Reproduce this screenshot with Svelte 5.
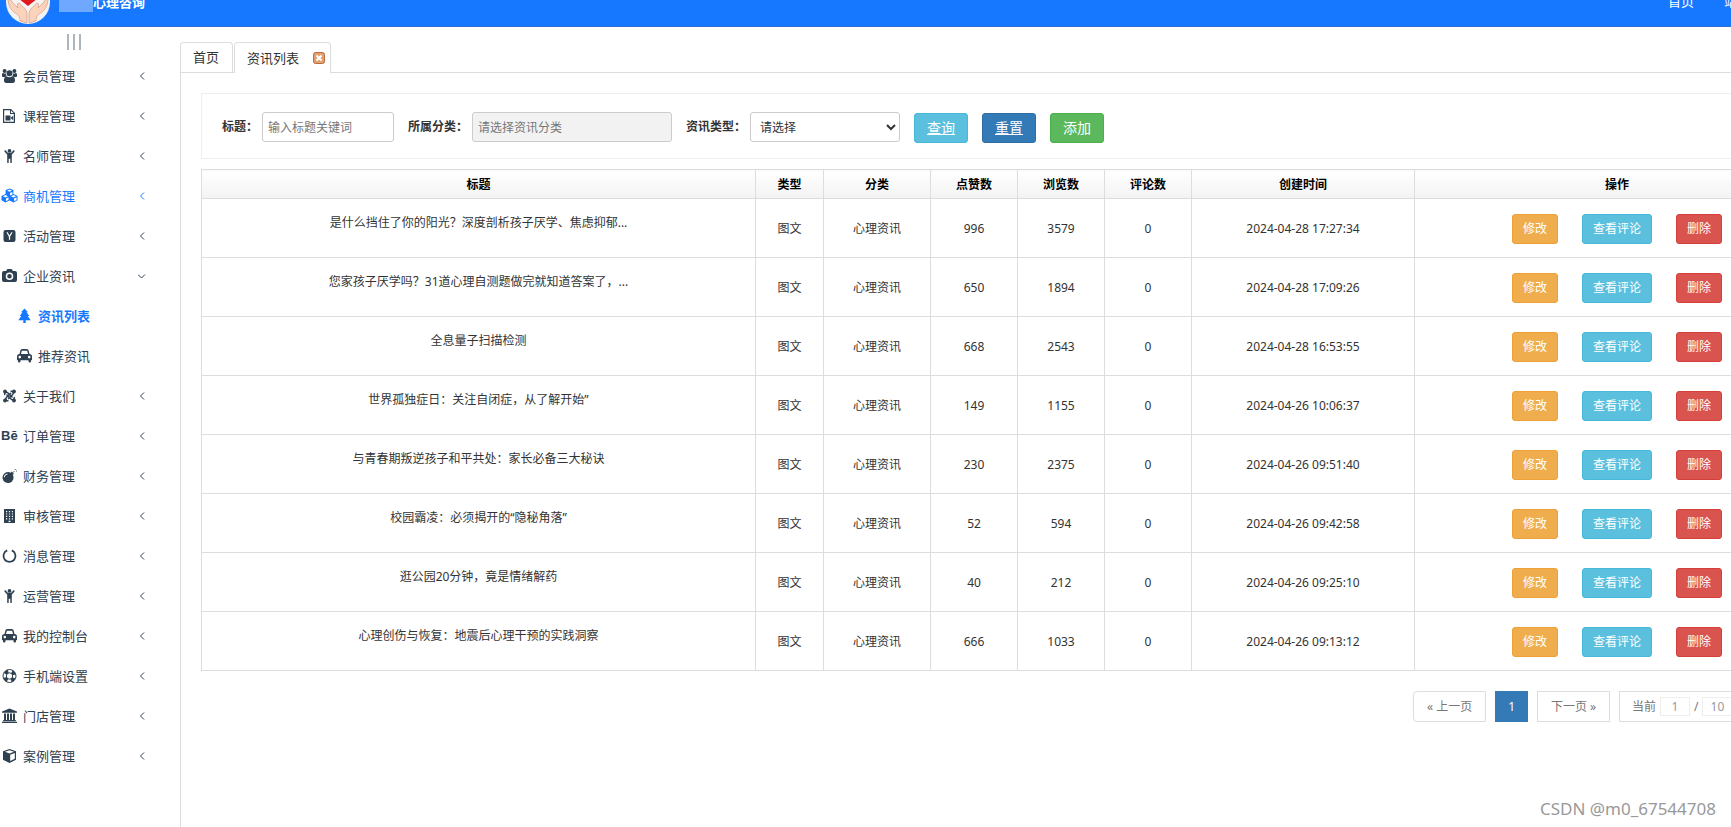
<script lang="ts">
  type MenuItem = { label: string; icon: string; open?: boolean; active?: boolean; children?: MenuItem[] };

  const menu: MenuItem[] = [
    { label: '会员管理', icon: 'users' },
    { label: '课程管理', icon: 'video' },
    { label: '名师管理', icon: 'child' },
    { label: '商机管理', icon: 'cubes', active: true },
    { label: '活动管理', icon: 'ycomb' },
    {
      label: '企业资讯',
      icon: 'camera',
      open: true,
      children: [
        { label: '资讯列表', icon: 'tree', active: true },
        { label: '推荐资讯', icon: 'car' }
      ]
    },
    { label: '关于我们', icon: 'joomla' },
    { label: '订单管理', icon: 'behance' },
    { label: '财务管理', icon: 'bomb' },
    { label: '审核管理', icon: 'building' },
    { label: '消息管理', icon: 'notch' },
    { label: '运营管理', icon: 'child' },
    { label: '我的控制台', icon: 'car' },
    { label: '手机端设置', icon: 'ring' },
    { label: '门店管理', icon: 'bank' },
    { label: '案例管理', icon: 'cube' }
  ];

  // filled shapes, drawn with the even-odd rule
  const shapes: Record<string, string> = {
    users:
      'M3.6 1a2 2 0 1 1 0 4 2 2 0 0 1 0-4zM13.4 1a2 2 0 1 1 0 4 2 2 0 0 1 0-4zM8.5 2.2a3 3 0 1 1 0 6 3 3 0 0 1 0-6zM1 8V6.8C1 5.6 1.5 5 2.3 5c.6.6 1.7.7 2.5.4 0 1.1.3 2 .9 2.7-.8 0-1.4.4-1.8.9H2.3C1.5 9 1 8.7 1 8zM16 8V6.8C16 5.6 15.5 5 14.7 5c-.6.6-1.7.7-2.5.4 0 1.1-.3 2-.9 2.7.8 0 1.4.4 1.8.9h1.6c.8 0 1.3-.3 1.3-1zM5.6 8.300c1.600 1.300 4.200 1.300 5.800 0 1.800 0 2.600 1.600 2.600 4.200 0 1.600-.8 2.500-2.200 2.500H5.200C3.800 15 3 14.100 3 12.500c0-2.600.8-4.200 2.600-4.200z',
    video:
      'M2 1h8l4 4v10H2zM3.200 2.200v11.600h9.600V6H9V2.200zM10 2.400V5h2.600zM4.500 7.500h5v5h-5zM9.800 9.700l2.400-2v4.600l-2.400-2z',
    child:
      'M8.500 1a1.900 1.900 0 1 1 0 3.800 1.900 1.900 0 0 1 0-3.800zM3.600 2.600c.3-.4.9-.4 1.200 0L7 4.900h3l2.200-2.300c.8-.8 1.900.3 1.200 1.200L10.800 6.600v7.800c0 .9-1.500.9-1.500 0v-3.600H7.700v3.600c0 .9-1.500.9-1.500 0V6.600L3.600 3.800c-.3-.4-.3-.8 0-1.200z',
    cubes:
      'M8.500.5l3.900 1.600v4l4.100 1.800v4.400l-4 2.200-4-2-4 2-4-2.200V7.900l4.100-1.800v-4zM8.500 1.600L6 2.700l2.500 1.100L11 2.700zM9 4.900v2.500l2.400-1V3.900zM4.500 7.100L2 8.200l2.500 1.200L7 8.200zM5 10.400v2.700l2.500-1.200V9.300zM12.500 7.100L10 8.200l2.500 1.200L15 8.200zM13 10.400v2.700l2.500-1.200V9.300z',
    ycomb:
      'M4.500 2h8a2 2 0 0 1 2 2v8a2 2 0 0 1-2 2h-8a2 2 0 0 1-2-2V4a2 2 0 0 1 2-2zM5.400 4.300l2.500 4.500v3h1.200v-3l2.500-4.500h-1.300L8.500 7.500 6.700 4.300z',
    camera:
      'M3 3h2.200l.7-1.500C6 1.200 6.400 1 6.700 1h3.600c.3 0 .7.2.8.5l.7 1.500H14a2 2 0 0 1 2 2v7a2 2 0 0 1-2 2H3a2 2 0 0 1-2-2V5a2 2 0 0 1 2-2zM8.500 4.500a3.800 3.800 0 1 0 0 7.600 3.800 3.800 0 0 0 0-7.600zM8.500 6a2.300 2.300 0 1 1 0 4.600 2.300 2.300 0 0 1 0-4.600z',
    tree: 'M8.500 .5L12 4.300h-1.500L13.300 8h-1.600l3 4.300H9.600l.2 2.700H7.200l.2-2.700H2.300l3-4.300H3.700l2.800-3.700H5z',
    car: 'M4.300 2.800C4.600 1.700 5.300 1 6.300 1h4.400c1 0 1.700.7 2 1.800L13.500 6c1.600 0 2.500 1 2.500 2.400v3.300c0 .3-.2.5-.5.5H15v1c0 1.700-2.500 1.700-2.500 0v-1h-8v1c0 1.700-2.500 1.700-2.500 0v-1h-.5c-.3 0-.5-.2-.5-.5V8.400C1 7 1.900 6 3.500 6zM5 6h7l-.7-2.800c-.1-.3-.3-.4-.6-.4H6.300c-.3 0-.5.1-.6.4zM3.800 7.800a1.300 1.300 0 1 0 0 2.600 1.300 1.300 0 0 0 0-2.600zM13.200 7.800a1.300 1.300 0 1 0 0 2.600 1.300 1.300 0 0 0 0-2.600z',
    bomb: 'M7 4c1 0 1.900.2 2.700.7L10.800 3.600l2.100 2.100-1.100 1.100A5.500 5.500 0 1 1 7 4zM6.500 5.500C4.500 5.700 3 7.200 2.800 9.200h1c.2-1.500 1.300-2.500 2.700-2.700z',
    building:
      'M3 1h11v14H3zM7.500 12.700V14h2v-1.300zM5 3v1.200h1.200V3zM7.900 3v1.200h1.200V3zM10.800 3v1.200H12V3zM5 5.400v1.200h1.200V5.400zM7.900 5.400v1.200h1.200V5.400zM10.800 5.400v1.200H12V5.400zM5 7.800V9h1.200V7.800zM7.900 7.800V9h1.200V7.800zM10.800 7.800V9H12V7.800zM5 10.200v1.200h1.200v-1.200zM7.900 10.200v1.200h1.200v-1.200zM10.800 10.200v1.200H12v-1.200z',
    bank: 'M8.500.5L16 3.500V4.800H1V3.500zM3 5.500h2V12h1V5.500h2V12h1V5.500h2V12h1V5.500h2V12h.8v1.200H2.200V12H3zM1 13.800h15V15H1z',
    cube: 'M8.500 1L15 3.300v8.400L8.500 15 2 11.700V3.300zM8.500 2.200L4 3.800l4.500 1.700L13 3.800zM9.200 6.800v6.300l4.600-2.300V5z'
  };

  // outlined shapes
  const lines: Record<string, string> = {
    bomb: 'M12 4.500l1.500-1.500M13.800 1.500h1M15.500 2.500v1',
    notch: 'M6.200 2.400a6 6 0 1 0 4.600 0'
  };

  const columns = ['标题', '类型', '分类', '点赞数', '浏览数', '评论数', '创建时间', '操作'];

  const rows = [
    { title: '是什么挡住了你的阳光？深度剖析孩子厌学、焦虑抑郁...', likes: 996, views: 3579, time: '2024-04-28 17:27:34' },
    { title: '您家孩子厌学吗？31道心理自测题做完就知道答案了，...', likes: 650, views: 1894, time: '2024-04-28 17:09:26' },
    { title: '全息量子扫描检测', likes: 668, views: 2543, time: '2024-04-28 16:53:55' },
    { title: '世界孤独症日：关注自闭症，从了解开始”', likes: 149, views: 1155, time: '2024-04-26 10:06:37' },
    { title: '与青春期叛逆孩子和平共处：家长必备三大秘诀', likes: 230, views: 2375, time: '2024-04-26 09:51:40' },
    { title: '校园霸凌：必须揭开的“隐秘角落”', likes: 52, views: 594, time: '2024-04-26 09:42:58' },
    { title: '逛公园20分钟，竟是情绪解药', likes: 40, views: 212, time: '2024-04-26 09:25:10' },
    { title: '心理创伤与恢复：地震后心理干预的实践洞察', likes: 666, views: 1033, time: '2024-04-26 09:13:12' }
  ];
</script>

{#snippet icon(name: string)}
  <svg class="icon" viewBox="0 0 17 16" aria-hidden="true">
    {#if name === 'behance'}
      <text x="0" y="12" class="behance">Bē</text>
    {:else if name === 'ring'}
      <g fill="none" stroke="currentColor">
        <circle cx="8.5" cy="8" r="6.5" />
        <circle cx="8.5" cy="8" r="3.2" />
        <circle cx="8.5" cy="8" r="4.800" stroke-width="3.600" stroke-dasharray="3.770" stroke-dashoffset="-1.885" />
      </g>
    {:else if name === 'joomla'}
      <g fill="currentColor">
        <circle cx="4" cy="3.5" r="1.900" />
        <circle cx="13" cy="3.5" r="1.900" />
        <circle cx="4" cy="12.5" r="1.900" />
        <circle cx="13" cy="12.5" r="1.900" />
      </g>
      <path
        d="M3.700 7C3 5.200 5.300 3.400 7 5l4.500 4.500M9.500 3.400c1.800-.7 3.800 1.300 2.200 3.100L7 11M13.300 9c.7 1.800-1.600 3.600-3.300 2L5.500 6.500M7.500 12.600c-1.800.7-3.800-1.300-2.200-3.100L10 5"
        fill="none"
        stroke="currentColor"
        stroke-width="1.500"
      />
    {/if}
    {#if shapes[name]}
      <path d={shapes[name]} fill="currentColor" fill-rule="evenodd" />
    {/if}
    {#if lines[name]}
      <path d={lines[name]} fill="none" stroke="currentColor" stroke-width={name === 'bomb' ? 0.8 : 1.8} />
    {/if}
  </svg>
{/snippet}

{#snippet entry(item: MenuItem, sub: boolean)}
  <a href="#menu" class="menu-link" class:sub class:active={item.active}>
    {@render icon(item.icon)}
    <span>{item.label}</span>
    {#if !sub}
      <svg class="arrow" viewBox="0 0 8 8" aria-hidden="true">
        <path d={item.open ? 'M0 2.500L3.500 6 7 2.500' : 'M6 .5L2.500 4 6 7.500'} fill="none" stroke="currentColor" />
      </svg>
    {/if}
  </a>
{/snippet}

<div class="page">
  <div class="canvas">
    <header class="topbar">
      <div class="brand">
        <svg class="logo" viewBox="0 0 44 44" aria-hidden="true">
          <circle cx="22" cy="22" r="22" fill="#f3f3f4" />
          <path d="M22 26C17 22 10 18 10 12c0-7 9-8 12-2 3-6 12-5 12 2 0 6-7 10-12 14z" fill="#e0191f" />
          <path d="M2 18c3 1 4 5 7 7l3 3c-1-3-1-5 1-5 3 3 8 6 8 11v9l-7-2c0-5-3-7-6-9-4-3-6-8-6-14z" fill="#fbd3bb" stroke="#d99a7c" stroke-width=".7" />
          <path d="M42 18c-3 1-4 5-7 7l-3 3c1-3 1-5-1-5-3 3-8 6-8 11v9l7-2c0-5 3-7 6-9 4-3 6-8 6-14z" fill="#fbd3bb" stroke="#d99a7c" stroke-width=".7" />
        </svg>
        <span class="mask"></span>
        <strong>心理咨询</strong>
      </div>
      <nav class="top-nav">
        <a href="#home">首页</a>
        <a href="#site">站</a>
      </nav>
    </header>

    <div class="body">
      <aside class="sidebar">
        <button class="toggle" type="button" aria-label="收起菜单"><i></i><i></i><i></i></button>
        <nav>
          {#each menu as item}
            {@render entry(item, false)}
            {#each item.children ?? [] as child}
              {@render entry(child, true)}
            {/each}
          {/each}
        </nav>
      </aside>

      <main class="main">
        <div class="tabs">
          <a href="#home" class="tab">首页</a>
          <div class="tab current">
            <a href="#list">资讯列表</a>
            <button type="button" class="close" aria-label="关闭">
              <svg viewBox="0 0 12 12" aria-hidden="true">
                <rect x=".5" y=".5" width="11" height="11" rx="2" fill="#e0a070" stroke="#bd6c38" />
                <path d="M3.500 3.500l5 5M8.500 3.500l-5 5" stroke="#fff" stroke-width="2" />
              </svg>
            </button>
          </div>
        </div>

        <div class="panel">
          <form class="filter">
            <div class="field">
              <label for="title">标题：</label>
              <input id="title" type="text" class="short" placeholder="输入标题关键词" />
            </div>
            <div class="field">
              <label for="category">所属分类：</label>
              <input id="category" type="text" class="long" placeholder="请选择资讯分类" readonly />
            </div>
            <div class="field">
              <label for="type">资讯类型：</label>
              <select id="type"><option>请选择</option></select>
            </div>
            <button type="button" class="btn large info underlined">查询</button>
            <button type="button" class="btn large primary underlined">重置</button>
            <button type="button" class="btn large success">添加</button>
          </form>

          <table>
            <colgroup>
              <col />
              <col class="c-type" />
              <col class="c-category" />
              <col class="c-count" />
              <col class="c-count" />
              <col class="c-count" />
              <col class="c-time" />
              <col class="c-actions" />
            </colgroup>
            <thead>
              <tr>
                {#each columns as column}
                  <th>{column}</th>
                {/each}
              </tr>
            </thead>
            <tbody>
              {#each rows as row}
                <tr>
                  <td><p>{row.title}</p></td>
                  <td>图文</td>
                  <td>心理资讯</td>
                  <td>{row.likes}</td>
                  <td>{row.views}</td>
                  <td>0</td>
                  <td>{row.time}</td>
                  <td>
                    <div class="actions">
                      <button type="button" class="btn warning">修改</button>
                      <button type="button" class="btn info">查看评论</button>
                      <button type="button" class="btn danger">删除</button>
                    </div>
                  </td>
                </tr>
              {/each}
            </tbody>
          </table>

          <div class="pager">
            <a href="#prev" class="page-link step first">« 上一页</a>
            <a href="#1" class="page-link on">1</a>
            <a href="#next" class="page-link step">下一页 »</a>
            <div class="page-link jump">
              <label for="page-no">当前</label>
              <input id="page-no" type="text" value="1" />
              <span>/</span>
              <input type="text" value="10" aria-label="总页数" readonly />
            </div>
          </div>
        </div>
      </main>
    </div>
  </div>
  <div class="watermark">CSDN @m0_67544708</div>
</div>

<style>
  :global(body) {
    background: #fff;
  }

  .page {
    position: relative;
    min-height: 100vh;
    overflow: hidden;
    font-family: 'Noto Sans', 'Noto Sans CJK SC', sans-serif;
    font-size: 12px;
    line-height: 18px;
    color: #333;
  }

  .page * {
    box-sizing: border-box;
  }

  /* the work area is wider than the window and runs off its right edge */
  .canvas {
    display: flex;
    flex-direction: column;
    min-height: 100vh;
    margin-right: -109px;
  }

  a {
    color: inherit;
    text-decoration: none;
  }

  button,
  input,
  select {
    font: inherit;
    color: inherit;
  }

  button {
    padding: 0;
    border: 0;
    background: none;
    cursor: pointer;
  }

  .topbar {
    display: flex;
    justify-content: space-between;
    align-items: flex-end;
    height: 27px;
    padding: 0 88px 2px 6px;
    overflow: hidden;
    background: #1678ff;
    border-bottom: 1px solid #2a6fd6;
    color: #fff;
    font-size: 13px;
  }

  .brand {
    display: flex;
    align-items: center;
  }

  .logo {
    width: 44px;
    height: 44px;
  }

  .mask {
    width: 34px;
    height: 20px;
    margin-left: 9px;
    background: #6fa9ff;
  }

  .top-nav {
    display: flex;
    align-items: center;
    height: 46px;
  }

  .top-nav a {
    padding: 0 15px;
  }

  .body {
    display: flex;
    flex: 1;
  }

  .sidebar {
    flex: none;
    width: 180px;
    color: #2f4050;
  }

  .toggle {
    display: flex;
    gap: 4px;
    padding: 7px 0 6px 67px;
  }

  .toggle i {
    width: 2px;
    height: 16px;
    background: #adb5bd;
  }

  .menu-link {
    display: flex;
    align-items: center;
    gap: 5px;
    height: 40px;
    padding: 0 34px 0 1px;
    font-size: 13px;
  }

  .menu-link.sub {
    padding-left: 16px;
  }

  .menu-link.active {
    color: #1678ff;
  }

  .menu-link.sub.active {
    font-weight: 700;
  }

  .icon {
    flex: none;
    width: 17px;
    height: 16px;
  }

  .behance {
    font: 700 13px 'Liberation Sans', sans-serif;
    fill: currentColor;
  }

  .arrow {
    width: 8px;
    height: 8px;
    margin-left: auto;
  }

  .main {
    flex: 1;
    min-width: 0;
    display: flex;
    flex-direction: column;
    padding-top: 15px;
  }

  .tabs {
    display: flex;
    gap: 1px;
    height: 31px;
    border-bottom: 1px solid #ddd;
  }

  .tab {
    display: flex;
    align-items: center;
    gap: 14px;
    height: 30px;
    padding: 0 13px 2px 12px;
    border: 1px solid #ddd;
    border-bottom: 0;
    border-radius: 4px 4px 0 0;
    font-size: 13px;
  }

  .tab.current {
    height: 31px;
    padding: 0 5px 1px 12px;
    background: #fff;
  }

  .close,
  .close svg {
    display: block;
    width: 12px;
    height: 12px;
  }

  .panel {
    flex: 1;
    padding: 20px 20px 0;
    border-left: 1px solid #ddd;
  }

  .filter {
    display: flex;
    align-items: center;
    gap: 14px;
    height: 66px;
    margin-bottom: 10px;
    padding: 2px 20px 0;
    border: 1px solid #eee;
  }

  .field {
    display: flex;
    align-items: center;
    gap: 4px;
  }

  .field label {
    font-weight: 700;
  }

  .field input,
  .field select {
    height: 30px;
    padding: 0 5px;
    border: 1px solid #ccc;
    border-radius: 3px;
    background: #fff;
  }

  .field .short {
    width: 132px;
  }

  .field .long {
    width: 200px;
    background: #f2f2f2;
  }

  .field select {
    width: 150px;
  }

  input::placeholder {
    color: #777;
    opacity: 1;
  }

  .btn {
    height: 30px;
    padding: 0 10px;
    border: 1px solid;
    border-radius: 3px;
    color: #fff;
  }

  .btn.large {
    margin-top: 2px;
    padding: 0 12px;
    font-size: 14px;
  }

  .underlined {
    text-decoration: underline;
  }

  .info {
    background: #5bc0de;
    border-color: #46b8da;
  }

  .primary {
    background: #337ab7;
    border-color: #2e6da4;
  }

  .success {
    background: #5cb85c;
    border-color: #4cae4c;
  }

  .warning {
    background: #f0ad4e;
    border-color: #eea236;
  }

  .danger {
    background: #d9534f;
    border-color: #d43f3a;
  }

  table {
    width: 100%;
    table-layout: fixed;
    border-collapse: collapse;
  }

  .c-type {
    width: 68px;
  }

  .c-category {
    width: 107px;
  }

  .c-count {
    width: 87px;
  }

  .c-time {
    width: 223px;
  }

  .c-actions {
    width: 405px;
  }

  th,
  td {
    padding: 2px 0 0;
    border: 1px solid #ddd;
    text-align: center;
  }

  th {
    height: 29px;
    background: linear-gradient(#fff, #f3f3f3);
    color: #000;
  }

  td {
    height: 59px;
  }

  td p {
    margin: 0 0 12px;
  }

  .actions {
    display: flex;
    justify-content: center;
    gap: 24px;
  }

  .pager {
    display: flex;
    justify-content: flex-end;
    gap: 9px;
    margin-top: 20px;
    color: #777;
  }

  .page-link {
    display: flex;
    align-items: center;
    justify-content: center;
    height: 31px;
    padding: 0 12px;
    border: 1px solid #ddd;
  }

  .step {
    min-width: 73px;
    padding: 0;
  }

  .first {
    border-radius: 4px 0 0 4px;
  }

  .on {
    background: #337ab7;
    border-color: #337ab7;
    color: #fff;
  }

  .jump {
    justify-content: flex-start;
    gap: 4px;
    width: 201px;
  }

  .jump input {
    width: 30px;
    height: 19px;
    padding: 0;
    border: 1px solid #eee;
    color: #999;
    text-align: center;
  }

  .watermark {
    position: absolute;
    right: 15px;
    bottom: 6px;
    font-size: 17px;
    line-height: 24px;
    color: #999;
  }
</style>
